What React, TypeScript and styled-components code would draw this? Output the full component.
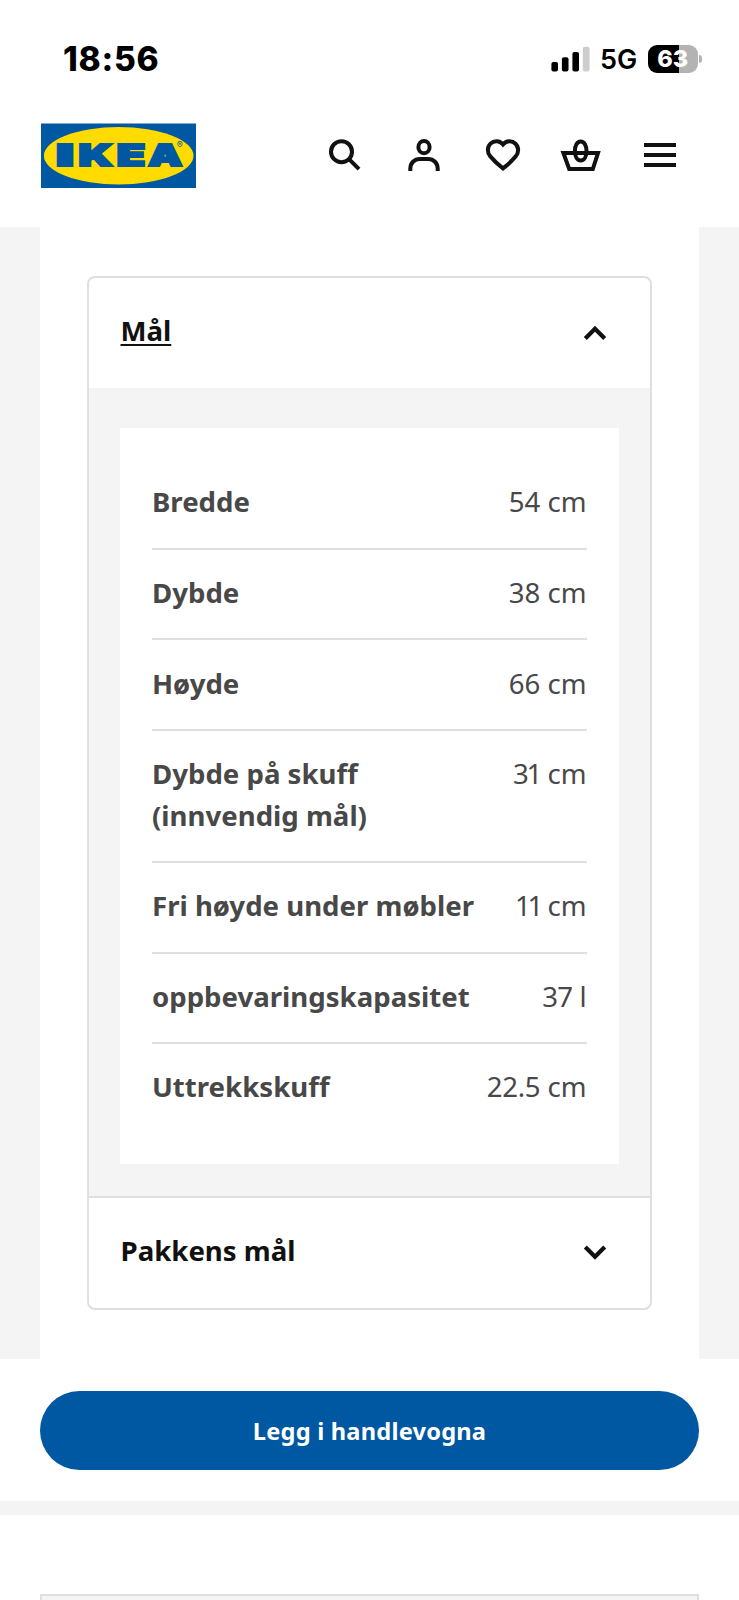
import React from "react";
import styled, { createGlobalStyle } from "styled-components";

const GlobalStyle = createGlobalStyle`
  *, *::before, *::after { box-sizing: border-box; }
  body {
    margin: 0;
    background: #fff;
    font-family: "Noto Sans", sans-serif;
    color: #111;
    overflow: hidden;
  }
  button { font: inherit; color: inherit; border: 0; background: none; padding: 0; }
`;

const Screen = styled.div`
  width: 739px;
  height: 1600px;
  overflow: hidden;
  display: flex;
  flex-direction: column;
  background: #fff;
`;

const StatusBar = styled.div`
  height: 119px;
  flex: none;
  display: flex;
  align-items: flex-start;
  justify-content: space-between;
  padding: 38px 37px 0 63px;
  font-family: Inter, sans-serif;
  color: #000;
`;

const Clock = styled.span`
  padding-top: 1px;
  font-size: 33.5px;
  line-height: 41px;
  font-weight: 800;
  letter-spacing: 0.7px;
`;

const StatusIcons = styled.div`
  display: flex;
  align-items: center;
  height: 41px;
`;

const Network = styled.span`
  width: 38px;
  margin: 2px 10px 0 10px;
  font-size: 27px;
  line-height: 40px;
  font-weight: 600;
  white-space: nowrap;
`;

const BatteryBody = styled.span`
  width: 49.5px;
  height: 28px;
  border-radius: 9px;
  background: linear-gradient(to right, #000 63%, #b3b3b3 63%);
  color: #fff;
  font-size: 23.5px;
  line-height: 28px;
  font-weight: 800;
  text-align: center;
`;

const BatteryTip = styled.span`
  width: 3px;
  height: 8px;
  margin-left: 1.5px;
  border-radius: 0 4px 4px 0;
  background: #b3b3b3;
`;

const Header = styled.header`
  height: 108px;
  flex: none;
  display: flex;
  justify-content: space-between;
  align-items: flex-start;
  padding: 4px 55px 0 41px;
`;

const Nav = styled.nav`
  display: flex;
  gap: 30.7px;
  padding-top: 8px;
`;

const IconButton = styled.button`
  width: 48px;
  height: 48px;
  display: block;
`;

const Glyph = styled.svg`
  display: block;
  fill: none;
  stroke: #111;
  stroke-width: 4;
`;

const Content = styled.main`
  height: 1132px;
  flex: none;
  padding: 49px 47px 0;
  border: solid #f4f4f4;
  border-width: 0 40px;
`;

const Accordion = styled.section`
  width: 565px;
  border: 2px solid #dfdfdf;
  border-radius: 8px;
  overflow: hidden;
`;

const AccordionHeader = styled.button<{ $open?: boolean }>`
  width: 100%;
  height: 110px;
  display: flex;
  align-items: center;
  justify-content: space-between;
  padding: 0 31px 0 31.5px;
  font-size: 27.6px;
  line-height: 41.4px;
  font-weight: 700;
  text-decoration: ${(p) => (p.$open ? "underline" : "none")};
  text-decoration-thickness: 2px;
  text-underline-offset: 3px;
`;

const AccordionTitle = styled.span`
  padding-bottom: 4px;
`;

const AccordionBody = styled.div`
  height: 810px;
  padding: 39.7px 31.5px 0 31px;
  background: #f4f4f4;
  border-bottom: 2px solid #dfdfdf;
`;

const Sheet = styled.dl`
  margin: 0;
  height: 736.6px;
  padding: 31.6px 32px;
  background: #fff;
`;

const Row = styled.div`
  display: flex;
  justify-content: space-between;
  padding: 22.1px 0 25.1px;
  border-bottom: 2px solid #dfdfdf;
  font-size: 27.6px;
  line-height: 41.4px;
  color: #484848;
  &:last-child { border-bottom: 0; }
`;

const Term = styled.dt`
  max-width: 330px;
  font-weight: 700;
`;

const Value = styled.dd`
  margin: 0;
  white-space: nowrap;
`;

const Amount = styled.span<{ $kern: number }>`
  letter-spacing: ${(p) => p.$kern}px;
`;

const BuyBar = styled.div`
  height: 142px;
  flex: none;
  padding: 32px 40px 0;
`;

const BuyButton = styled.button`
  width: 100%;
  height: 79px;
  border-radius: 40px;
  background: #0058a3;
  color: #fff;
  font-size: 23.65px;
  letter-spacing: 0.2px;
  font-weight: 700;
`;

const Divider = styled.div`
  height: 13.7px;
  flex: none;
  background: #f4f4f4;
`;

const NextCard = styled.div`
  height: 40px;
  flex: none;
  margin: 79.3px 40px 0;
  border: 2px solid #dfdfdf;
  background: #f4f4f4;
`;

const Logo = () => (
  <svg width="155" height="65" viewBox="41 123 155 65" role="img" aria-label="IKEA">
    <rect x="41" y="123.5" width="155" height="64.5" fill="#0058a3" />
    <ellipse cx="118.7" cy="155.8" rx="74.8" ry="28.7" fill="#ffdb00" />
    <g fill="#0058a3" stroke="#0058a3" strokeWidth="2.2" fontFamily="Inter, sans-serif" fontWeight="900" fontSize="30">
      <text transform="translate(56 165.900) scale(2.050 1)" x="0" y="0">I</text>
      <text transform="translate(78.600 165.900) scale(1.500 1)" x="0" y="0">K</text>
      <text transform="translate(116.800 165.900) scale(1.550 1)" x="0" y="0">E</text>
      <text transform="translate(148.300 165.900) scale(1.420 1)" x="0" y="0">A</text>
    </g>
    <text x="176.8" y="148" fontFamily="Inter, sans-serif" fontSize="9" fill="#0058a3">®</text>
  </svg>
);

const Signal = () => (
  <svg width="39" height="26" viewBox="0 0 39 26">
    <rect x="0.4" y="16" width="6.6" height="9.5" rx="2" />
    <rect x="10.900" y="11.2" width="6.6" height="14.3" rx="2" />
    <rect x="21.400" y="6" width="6.6" height="19.5" rx="2" />
    <rect x="31.8" y="0.7" width="6.8" height="24.8" rx="2" fill="#cdcdcd" />
  </svg>
);

const navItems = [
  {
    label: "Søk",
    art: (
      <>
        <circle cx="20.5" cy="20.7" r="10.5" />
        <path d="M28 28.2 38 38.2" />
      </>
    ),
  },
  {
    label: "Profil",
    art: (
      <>
        <ellipse cx="24" cy="16.2" rx="5.6" ry="6.1" />
        <path d="M10.3 40v-2.2c0-5.6 4-9.9 9.6-9.9h8.2c5.6 0 9.6 4.3 9.6 9.9V40" />
      </>
    ),
  },
  {
    label: "Favoritter",
    art: <path d="M24 13.4c3.300-4 9.100-4 12.500-.7 3.500 3.500 3.500 9 .2 12.700-3.500 4.100-7.800 8.300-12.700 12-4.900-3.700-9.200-7.900-12.700-12-3.300-3.700-3.300-9.200.2-12.700 3.400-3.300 9.200-3.300 12.500.7Z" />,
  },
  {
    label: "Handlekurv",
    art: (
      <>
        <path d="M6.400 22h34.600l-5.200 16H12.200Z" />
        <path d="M23.700 10.400c3.600 0 5.800 4.200 5.800 9.600 0 5-2 9.500-5.800 9.500s-5.800-4.500-5.800-9.500c0-5.400 2.200-9.600 5.800-9.600Z" />
      </>
    ),
  },
  { label: "Meny", art: <path d="M8 14h32M8 24h32M8 34h32" /> },
];

const Chevron = ({ up }: { up?: boolean }) => (
  <Glyph width="48" height="48" viewBox="0 0 48 48">
    <path d={up ? "M14.3 29.5 24 19.8l9.7 9.7" : "M14.3 18 24 27.7l9.7-9.7"} strokeWidth="4.2" />
  </Glyph>
);

type Measure = { name: string; amount: string; unit: string; kern?: number };

const measures: Measure[] = [
  { name: "Bredde", amount: "54", unit: "cm" },
  { name: "Dybde", amount: "38", unit: "cm" },
  { name: "Høyde", amount: "66", unit: "cm" },
  { name: "Dybde på skuff (innvendig mål)", amount: "31", unit: "cm", kern: -2.1 },
  { name: "Fri høyde under møbler", amount: "11", unit: "cm", kern: -3.1 },
  { name: "oppbevaringskapasitet", amount: "37", unit: "l", kern: -0.8 },
  { name: "Uttrekkskuff", amount: "22.5", unit: "cm", kern: -0.3 },
];

export default function App() {
  return (
    <Screen>
      <GlobalStyle />
      <StatusBar>
        <Clock>18:56</Clock>
        <StatusIcons>
          <Signal />
          <Network>5G</Network>
          <BatteryBody>63</BatteryBody>
          <BatteryTip />
        </StatusIcons>
      </StatusBar>
      <Header>
        <Logo />
        <Nav>
          {navItems.map((item) => (
            <IconButton key={item.label} aria-label={item.label}>
              <Glyph width="48" height="48" viewBox="0 0 48 48">{item.art}</Glyph>
            </IconButton>
          ))}
        </Nav>
      </Header>
      <Content>
        <Accordion>
          <AccordionHeader $open aria-expanded="true">
            <AccordionTitle>Mål</AccordionTitle>
            <Chevron up />
          </AccordionHeader>
          <AccordionBody>
            <Sheet>
              {measures.map(({ name, amount, unit, kern = 0 }) => (
                <Row key={name}>
                  <Term>{name}</Term>
                  <Value>
                    <Amount $kern={kern}>{amount}</Amount> {unit}
                  </Value>
                </Row>
              ))}
            </Sheet>
          </AccordionBody>
          <AccordionHeader aria-expanded="false">
            <AccordionTitle>Pakkens mål</AccordionTitle>
            <Chevron />
          </AccordionHeader>
        </Accordion>
      </Content>
      <BuyBar>
        <BuyButton>Legg i handlevogna</BuyButton>
      </BuyBar>
      <Divider />
      <NextCard />
    </Screen>
  );
}
